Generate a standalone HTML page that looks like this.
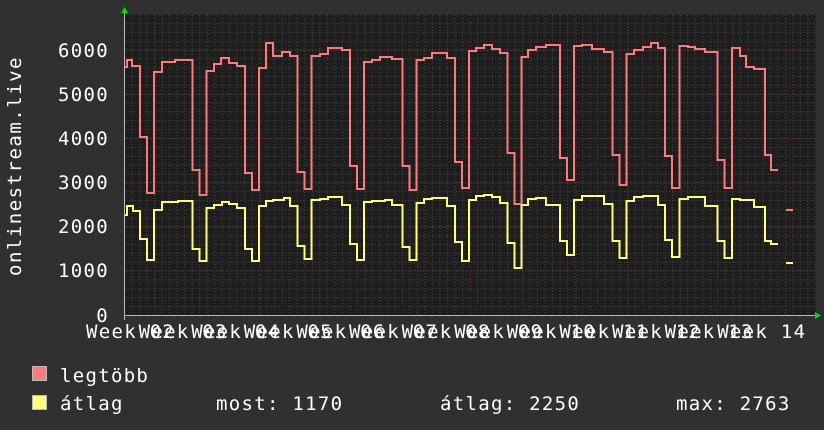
<!DOCTYPE html>
<html><head><meta charset="utf-8"><style>
html,body{margin:0;padding:0;background:#303030;}
svg{display:block}
text{font-family:"DejaVu Sans Mono","Liberation Mono",monospace;fill:#fff;letter-spacing:1.3px;}
</style></head><body>
<svg width="824" height="430" viewBox="0 0 824 430" xmlns="http://www.w3.org/2000/svg">
<defs>
<pattern id="vmin" x="124" y="0" width="7.51" height="430" patternUnits="userSpaceOnUse"><line x1="0.5" y1="0" x2="0.5" y2="430" stroke="#454545" stroke-width="1" stroke-dasharray="1,2"/></pattern>
<pattern id="hmin" x="0" y="315" width="824" height="8.85" patternUnits="userSpaceOnUse"><line x1="0" y1="0.5" x2="824" y2="0.5" stroke="#454545" stroke-width="1" stroke-dasharray="1,2"/></pattern>
</defs>
<rect x="0" y="0" width="824" height="430" fill="#303030"/>
<rect x="124" y="14" width="692" height="301" fill="#1e1e1e"/>
<rect x="124" y="14" width="692" height="301" fill="url(#vmin)"/>
<rect x="124" y="14" width="692" height="301" fill="url(#hmin)"/>
<g stroke="#5c2a2a" stroke-width="1" stroke-dasharray="1,2">
<line x1="124" y1="270.5" x2="816" y2="270.5"/><line x1="124" y1="226.5" x2="816" y2="226.5"/>
<line x1="124" y1="182.5" x2="816" y2="182.5"/><line x1="124" y1="138.5" x2="816" y2="138.5"/>
<line x1="124" y1="94.5" x2="816" y2="94.5"/><line x1="124" y1="50.5" x2="816" y2="50.5"/>
</g>
<g stroke="#4e2828" stroke-width="1" stroke-dasharray="1,3">
<line x1="155.5" y1="14" x2="155.5" y2="315"/><line x1="208.5" y1="14" x2="208.5" y2="315"/>
<line x1="260.5" y1="14" x2="260.5" y2="315"/><line x1="313.5" y1="14" x2="313.5" y2="315"/>
<line x1="365.5" y1="14" x2="365.5" y2="315"/><line x1="418.5" y1="14" x2="418.5" y2="315"/>
<line x1="470.5" y1="14" x2="470.5" y2="315"/><line x1="523.5" y1="14" x2="523.5" y2="315"/>
<line x1="576.5" y1="14" x2="576.5" y2="315"/><line x1="628.5" y1="14" x2="628.5" y2="315"/>
<line x1="681.5" y1="14" x2="681.5" y2="315"/><line x1="733.5" y1="14" x2="733.5" y2="315"/>
<line x1="786.5" y1="14" x2="786.5" y2="315"/>
</g>
<path fill="none" stroke="#ff7b7b" stroke-width="2" d="M124,67 H127 V60 H132 V66 H140 V137 H147 V193 H154
V72 H162 V62 H175 V60 H192.5
V170 H199.5 V195 H206.5 V71 H214 V64 H221 V58 H229 V63 H237 V66 H245
V173 H252 V190 H259 V68 H266 V43 H273 V56 H282 V52 H290 V56 H297.5
V172 H304.5 V189 H311.5 V56 H320 V54 H328 V48 H342 V50 H350
V166 H357 V189 H364 V62 H372 V60 H380 V57 H392 V59 H402.5
V166 H409.5 V190 H416.5 V60 H424 V58 H432 V53 H447 V58 H455
V162 H462 V188 H469 V51 H476 V48 H484 V45 H492 V49 H500 V53 H507.5
V153 H514.5 V204 H521.5 V57 H528 V50 H536 V47 H546 V45 H560
V158 H567 V180 H574 V46 H582 V45 H592 V49 H604 V52 H612.5
V155 H619.5 V185 H626.5 V54 H634 V50 H643 V47 H651 V43 H658 V48 H665
V156 H672 V188 H679.5 V46 H688 V47 H695 V49 H705 V52 H717.5
V160 H724.5 V188 H732 V48 H740 V56 H746 V67 H754 V69 H765
V155 H771 V170 H778 M786,210 H793"/>
<path fill="none" stroke="#ffff7b" stroke-width="2" d="M124,215 H127 V206 H133 V211 H140 V239 H147 V260 H154
V210 H162 V202 H178 V201 H192.5
V249 H199.5 V261 H206.5 V208 H214 V205 H222 V202 H229 V204 H237 V208 H245
V249 H252 V261 H259 V206 H266 V201 H273 V200 H284 V198 H290 V206 H297.5
V246 H304.5 V259 H311.5 V200 H320 V199 H328 V197 H342 V205 H350
V244 H357 V260 H364 V202 H372 V201 H385 V200 H392 V205 H402.5
V247 H409.5 V260 H416.5 V203 H424 V199 H432 V198 H447 V206 H455
V242 H462 V261 H469 V200 H476 V196 H484 V195 H492 V197 H500 V203 H507.5
V243 H514.5 V268 H521.5 V205 H528 V199 H536 V198 H546 V205 H560
V241 H567 V255 H574 V200 H582 V196 H604 V204 H612.5
V241 H619.5 V258 H626.5 V201 H634 V197 H643 V196 H658 V205 H665
V240 H672 V257 H679.5 V199 H688 V197 H705 V206 H717.5
V241 H724.5 V258 H732 V199 H740 V200 H754 V207 H765
V241 H771 V244 H778 M786,263 H793"/>
<line x1="124" y1="315.5" x2="816" y2="315.5" stroke="#bbbbbb" stroke-width="1"/>
<line x1="124.5" y1="12" x2="124.5" y2="320" stroke="#bbbbbb" stroke-width="1"/>
<polygon points="121,13 124.5,7 128,13" fill="#00dd00"/>
<polygon points="815,312 821,315.5 815,319" fill="#00dd00"/>
<g font-size="19" text-anchor="end">
<text x="109" y="57">6000</text><text x="109" y="101">5000</text>
<text x="109" y="145">4000</text><text x="109" y="189">3000</text>
<text x="109" y="233">2000</text><text x="109" y="277">1000</text>
<text x="109" y="322">0</text>
</g>
<g font-size="19">
<text x="86" y="338">Week 02</text><text x="138.6" y="338">Week 03</text>
<text x="191.2" y="338">Week 04</text><text x="243.8" y="338">Week 05</text>
<text x="296.4" y="338">Week 06</text><text x="349" y="338">Week 07</text>
<text x="401.6" y="338">Week 08</text><text x="454.2" y="338">Week 09</text>
<text x="506.8" y="338">Week 10</text><text x="559.4" y="338">Week 11</text>
<text x="612" y="338">Week 12</text><text x="664.6" y="338">Week 13</text>
<text x="717.2" y="338">Week 14</text>
</g>
<text font-size="19" style="letter-spacing:1.5px" transform="translate(21,166) rotate(-90)" text-anchor="middle">onlinestream.live</text>
<rect x="32.5" y="366.5" width="14" height="14" fill="#ff7b7b" stroke="#bbb" stroke-width="1"/>
<rect x="32.5" y="395.5" width="14" height="14" fill="#ffff7b" stroke="#bbb" stroke-width="1"/>
<g font-size="19">
<text x="60" y="382">legtöbb</text>
<text x="60" y="410">átlag</text>
<text x="216" y="410">most: 1170</text>
<text x="440" y="410">átlag: 2250</text>
<text x="676" y="410">max: 2763</text>
</g>
</svg>
</body></html>
